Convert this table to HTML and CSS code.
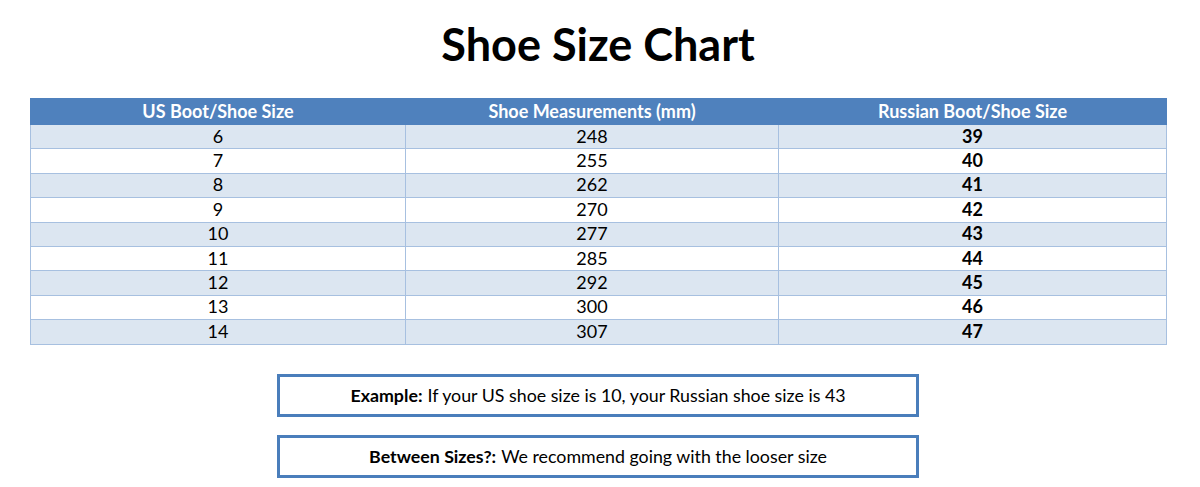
FILE: index.html
```html
<!DOCTYPE html>
<html>
<head>
<meta charset="utf-8">
<link rel="stylesheet" href="styles.css">
</head>
<body>
<h1 class="title">Shoe Size Chart</h1>
<table class="chart">
  <colgroup><col class="c1"><col class="c2"><col class="c3"></colgroup>
  <thead>
    <tr><th>US Boot/Shoe Size</th><th>Shoe Measurements (mm)</th><th>Russian Boot/Shoe Size</th></tr>
  </thead>
  <tbody>
    <tr><td>6</td><td>248</td><td class="ru">39</td></tr>
    <tr><td>7</td><td>255</td><td class="ru">40</td></tr>
    <tr><td>8</td><td>262</td><td class="ru">41</td></tr>
    <tr><td>9</td><td>270</td><td class="ru">42</td></tr>
    <tr><td>10</td><td>277</td><td class="ru">43</td></tr>
    <tr><td>11</td><td>285</td><td class="ru">44</td></tr>
    <tr><td>12</td><td>292</td><td class="ru">45</td></tr>
    <tr><td>13</td><td>300</td><td class="ru">46</td></tr>
    <tr><td>14</td><td>307</td><td class="ru">47</td></tr>
  </tbody>
</table>
<div class="notes">
  <div class="note"><b>Example:</b> If your US shoe size is 10, your Russian shoe size is 43</div>
  <div class="note"><b>Between Sizes?:</b> We recommend going with the looser size</div>
</div>
</body>
</html>
```
FILE: styles.css
```css
html, body { margin: 0; padding: 0; background: #fff; }
body {
  font-family: Lato, "Open Sans", sans-serif;
  color: #000;
  width: 1200px;
}
.title {
  margin: 0;
  height: 98px;
  box-sizing: border-box;
  padding-top: 17px;
  text-align: center;
  font-size: 45px;
  line-height: 54px;
  font-weight: 700;
  padding-right: 4px;
}
.chart {
  margin-left: 30px;
  width: 1136px;
  border-collapse: collapse;
  table-layout: fixed;
  font-size: 18px;
}
.chart .c1 { width: 375px; }
.chart .c2 { width: 373px; }
.chart .c3 { width: 388px; }
.chart th {
  background: #4f81bd;
  color: #fff;
  font-weight: 700;
  height: 25px;
  padding: 0;
  line-height: 25px;
  border: 1px solid #4f81bd;
}
.chart td {
  height: 21.4px;
  padding: 0 0 2px;
  text-align: center;
  line-height: 20px;
  border: 1px solid #a7c0e0;
}
.chart tbody tr:nth-child(odd) td { background: #dce6f1; }
.chart td.ru { font-weight: 700; }
.notes {
  display: flex;
  flex-direction: column;
  align-items: center;
  gap: 18px;
  margin-top: 29px;
  padding-right: 4px;
}
.note {
  width: 642px;
  height: 43px;
  box-sizing: border-box;
  border: 3px solid #4a7ebb;
  display: flex;
  align-items: center;
  justify-content: center;
  font-size: 17.8px;
}
.note b { margin-right: 5px; }
```
